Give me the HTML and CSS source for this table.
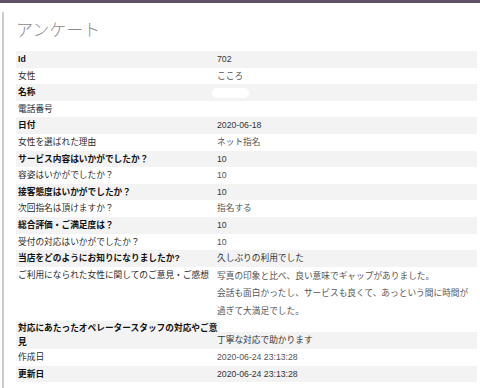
FILE: index.html
```html
<!DOCTYPE html>
<html lang="ja">
<head>
<meta charset="utf-8">
<title>アンケート</title>
<link rel="stylesheet" href="styles.css">
</head>
<body>
<div class="topbar"></div>
<div class="page">
  <div class="content">
    <h1 class="title">アンケート</h1>
    <div class="table">
      <div class="row odd"><div class="label">Id</div><div class="value">702</div></div>
      <div class="row"><div class="label">女性</div><div class="value">こころ</div></div>
      <div class="row odd"><div class="label">名称</div><div class="value"><span class="redact"></span></div></div>
      <div class="row"><div class="label">電話番号</div><div class="value"></div></div>
      <div class="row odd"><div class="label">日付</div><div class="value">2020-06-18</div></div>
      <div class="row"><div class="label">女性を選ばれた理由</div><div class="value">ネット指名</div></div>
      <div class="row odd"><div class="label">サービス内容はいかがでしたか？</div><div class="value">10</div></div>
      <div class="row"><div class="label">容姿はいかがでしたか？</div><div class="value">10</div></div>
      <div class="row odd"><div class="label">接客態度はいかがでしたか？</div><div class="value">10</div></div>
      <div class="row"><div class="label">次回指名は頂けますか？</div><div class="value">指名する</div></div>
      <div class="row odd"><div class="label">総合評価・ご満足度は？</div><div class="value">10</div></div>
      <div class="row"><div class="label">受付の対応はいかがでしたか？</div><div class="value">10</div></div>
      <div class="row odd"><div class="label">当店をどのようにお知りになりましたか?</div><div class="value">久しぶりの利用でした</div></div>
      <div class="row"><div class="label">ご利用になられた女性に関してのご意見・ご感想</div><div class="value multi">写真の印象と比べ、良い意味でギャップがありました。<br>会話も面白かったし、サービスも良くて、あっという間に時間が過ぎて大満足でした。</div></div>
      <div class="row odd split"><div class="label wide">対応にあたったオペレータースタッフの対応やご意見</div><div class="value">丁寧な対応で助かります</div></div>
      <div class="row"><div class="label">作成日</div><div class="value">2020-06-24 23:13:28</div></div>
      <div class="row odd"><div class="label">更新日</div><div class="value">2020-06-24 23:13:28</div></div>
    </div>
  </div>
</div>
</body>
</html>
```
FILE: styles.css
```css
html, body {
  margin: 0;
  padding: 0;
  background: #ffffff;
}
body {
  font-family: "Liberation Sans", "Noto Sans CJK JP", sans-serif;
  font-size: 8.7px;
  color: #333333;
  overflow: hidden;
}
.topbar {
  height: 3px;
  background: #5f5266;
}
.page {
  margin: 9px 0 0 2px;
  border-left: 2px solid #cccccc;
  min-height: calc(100vh - 12px);
  box-sizing: border-box;
}
.content {
  padding: 0 3px 0 12px;
}
.title {
  margin: 0;
  padding-top: 7px;
  font-size: 17px;
  line-height: 20px;
  font-weight: 300;
  color: #8c8c8c;
  font-family: "Noto Sans CJK JP", sans-serif;
}
.table {
  margin-top: 12px;
}
.row {
  display: grid;
  grid-template-columns: 199px 1fr;
}
.row.odd {
  background: #f3f3f3;
}
.label {
  padding: 1px 2px;
  line-height: 14.6px;
  color: #2a2a2a;
}
.row.odd .label {
  font-weight: bold;
  color: #111111;
}
.value {
  padding: 1px 2px;
  line-height: 14.6px;
  color: #555555;
  min-height: 14.6px;
}
.row.odd .value {
  color: #333333;
}
.value.multi {
  line-height: 17.4px;
}
.row.split {
  background: transparent;
}
.row.split .label {
  width: 202px;
  padding: 0 0 0 2px;
  line-height: 14px;
  background: #f3f3f3;
}
.row.split .value {
  align-self: end;
  background: #f3f3f3;
}
.redact {
  display: inline-block;
  width: 37px;
  height: 10px;
  margin-left: -5px;
  border-radius: 5px;
  background: #ffffff;
  vertical-align: middle;
}
```
